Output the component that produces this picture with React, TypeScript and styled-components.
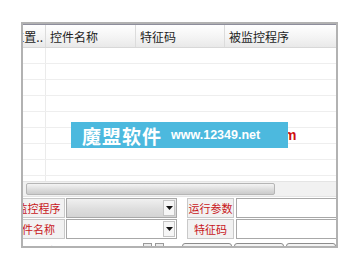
import styled, { createGlobalStyle } from 'styled-components';

const GlobalStyle = createGlobalStyle`
  html, body {
    margin: 0;
    padding: 0;
    background: #ffffff;
  }
  body {
    font-family: "Noto Sans CJK SC", "DejaVu Sans", sans-serif;
  }
`;

const Page = styled.div`
  width: 360px;
  height: 270px;
  padding: 22px 0 0 21px;
  box-sizing: border-box;
  overflow: hidden;
`;

const Frame = styled.div`
  position: relative;
  width: 317px;
  height: 226px;
  box-sizing: border-box;
  border: 2px solid #b2b2b2;
  overflow: hidden;
  display: flex;
  flex-direction: column;
  background: #ffffff;
`;

const Header = styled.div`
  display: grid;
  grid-template-columns: 22px 90px 89px 1fr;
  height: 24px;
  box-sizing: border-box;
  border-top: 1px solid #8e8e9c;
  border-bottom: 1px solid #d8d8d8;
  background: linear-gradient(#ffffff, #f3f3f3 60%, #e9e9e9);
  flex: none;
`;

const HeaderCell = styled.div<{ $clip?: boolean }>`
  display: flex;
  align-items: center;
  justify-content: ${(p) => (p.$clip ? 'flex-end' : 'flex-start')};
  padding-left: ${(p) => (p.$clip ? '0' : '4px')};
  padding-right: ${(p) => (p.$clip ? '2px' : '0')};
  font-size: 12px;
  color: #1e1e1e;
  white-space: nowrap;
  overflow: hidden;
  border-left: ${(p) => (p.$clip ? 'none' : '1px solid #dcdcdc')};
`;

const Body = styled.div`
  position: relative;
  height: 133px;
  flex: none;
  overflow: hidden;
`;

const Row = styled.div`
  display: grid;
  grid-template-columns: 22px 90px 89px 1fr;
  height: 16px;
  box-sizing: border-box;
  border-bottom: 1px solid #eeeeee;
`;

const Cell = styled.div<{ $line?: boolean }>`
  border-left: ${(p) => (p.$line ? '1px solid #ebebeb' : 'none')};
`;

const Watermark = styled.div`
  position: absolute;
  left: 48px;
  top: 74px;
  width: 217px;
  height: 26px;
  background: #4cb9de;
  display: flex;
  align-items: center;
  gap: 9px;
  padding-left: 11px;
  box-sizing: border-box;
  color: #ffffff;
  font-weight: bold;
`;

const MarkName = styled.span`
  font-size: 19px;
  letter-spacing: 1px;
`;

const MarkUrl = styled.span`
  font-family: "Liberation Sans", Arial, sans-serif;
  font-size: 12.5px;
`;

const RedTail = styled.span`
  position: absolute;
  left: 261px;
  top: 79px;
  color: #d01010;
  font-family: "Liberation Sans", Arial, sans-serif;
  font-weight: bold;
  font-size: 14px;
`;

const ScrollTrack = styled.div`
  height: 16px;
  flex: none;
  box-sizing: border-box;
  background: #f1f1f1;
  border-top: 1px solid #e4e4e4;
  border-bottom: 1px solid #e4e4e4;
  padding: 1px 0 1px 3px;
`;

const ScrollThumb = styled.div`
  width: 249px;
  height: 12px;
  box-sizing: border-box;
  border: 1px solid #b5b5b5;
  border-radius: 2px;
  background: linear-gradient(#f4f4f4, #dcdcdc 55%, #cbcbcb);
`;

const Form = styled.div`
  display: flex;
  flex-direction: column;
  gap: 1px;
  margin: 1px 0 0 -22px;
`;

const FormRow = styled.div`
  display: grid;
  grid-template-columns: 64px 111px 56px 1fr;
  column-gap: 1px;
  height: 20px;
  & > :nth-child(3) {
    margin-left: 9px;
  }
  & > :nth-child(4) {
    margin-left: 1px;
  }
`;

const Label = styled.div`
  display: flex;
  align-items: center;
  justify-content: center;
  box-sizing: border-box;
  border: 1px solid #c9c9c9;
  background: #f2f2f2;
  color: #c8161a;
  font-size: 11px;
  white-space: nowrap;
`;

const Combo = styled.div<{ $disabled?: boolean }>`
  display: flex;
  justify-content: flex-end;
  box-sizing: border-box;
  border: 1px solid #a8a8a8;
  background: ${(p) =>
    p.$disabled ? 'linear-gradient(#f0f0f0, #dedede 55%, #d4d4d4)' : '#ffffff'};
  padding: 1px;
`;

const DropButton = styled.div`
  width: 12px;
  display: flex;
  align-items: center;
  justify-content: center;
  box-sizing: border-box;
  border: 1px solid #c4c4c4;
  background: #f6f6f6;
`;

const Input = styled.div`
  box-sizing: border-box;
  border: 1px solid #a8a8a8;
  border-right: none;
  background: #ffffff;
`;

const ActionRow = styled.div`
  display: flex;
  align-items: flex-start;
  height: 20px;
  margin-top: 3px;
  padding-left: 26px;
`;

const FaintText = styled.span`
  font-size: 11px;
  color: #a8a8a8;
  width: 128px;
  line-height: 14px;
  padding-top: 1px;
`;

const SquareButton = styled.div`
  width: 10px;
  height: 14px;
  margin-right: 3px;
  box-sizing: border-box;
  border: 1px solid #9a9a9a;
  background: #ececec;
`;

const ActionButton = styled.div<{ $first?: boolean }>`
  width: 55px;
  height: 16px;
  margin-left: ${(p) => (p.$first ? '15px' : '2px')};
  box-sizing: border-box;
  border: 1px solid #8c8c8c;
  border-radius: 3px;
  background: #f3f3f3;
  font-size: 11px;
  color: #555;
  text-align: center;
  line-height: 16px;
`;

const Arrow = () => (
  <svg width="7" height="4" viewBox="0 0 7 4">
    <path d="M0 0h7L3.5 4z" fill="#111" />
  </svg>
);

const rows = Array.from({ length: 9 }, (_, i) => i);

export default function App() {
  return (
    <>
      <GlobalStyle />
      <Page>
        <Frame>
          <Header>
            <HeaderCell $clip>位置..</HeaderCell>
            <HeaderCell>控件名称</HeaderCell>
            <HeaderCell>特征码</HeaderCell>
            <HeaderCell>被监控程序</HeaderCell>
          </Header>
          <Body>
            {rows.map((r) => (
              <Row key={r}>
                <Cell />
                <Cell $line />
                <Cell />
                <Cell />
              </Row>
            ))}
            <RedTail>m</RedTail>
            <Watermark>
              <MarkName>魔盟软件</MarkName>
              <MarkUrl>www.12349.net</MarkUrl>
            </Watermark>
          </Body>
          <ScrollTrack>
            <ScrollThumb />
          </ScrollTrack>
          <Form>
            <FormRow>
              <Label>被监控程序</Label>
              <Combo $disabled>
                <DropButton>
                  <Arrow />
                </DropButton>
              </Combo>
              <Label>运行参数</Label>
              <Input />
            </FormRow>
            <FormRow>
              <Label>控件名称</Label>
              <Combo>
                <DropButton>
                  <Arrow />
                </DropButton>
              </Combo>
              <Label>特征码</Label>
              <Input />
            </FormRow>
            <ActionRow>
              <FaintText>窗口标题 类名</FaintText>
              <SquareButton />
              <SquareButton />
              <ActionButton $first>添加</ActionButton>
              <ActionButton>修改</ActionButton>
              <ActionButton>删除</ActionButton>
            </ActionRow>
          </Form>
        </Frame>
      </Page>
    </>
  );
}
